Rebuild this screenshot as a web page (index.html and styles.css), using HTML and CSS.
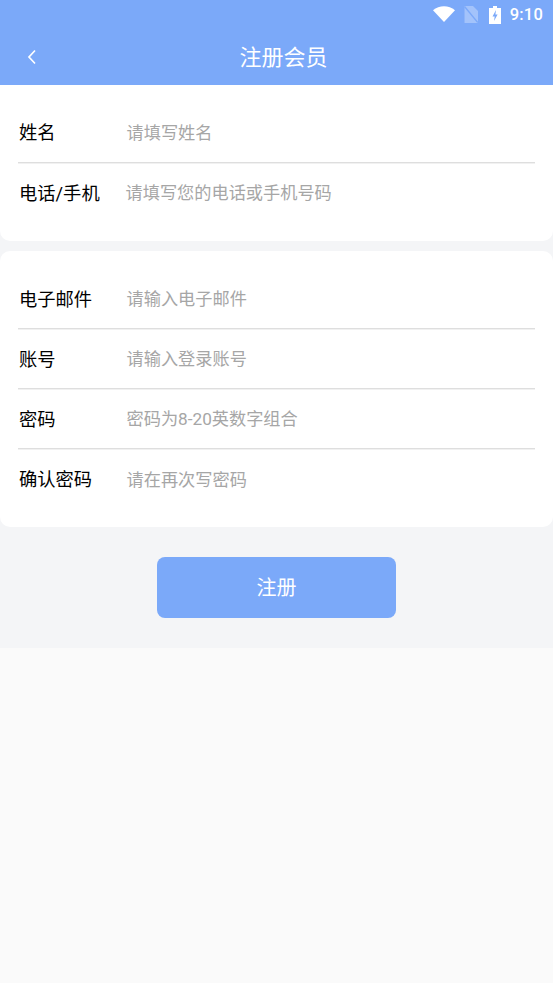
FILE: index.html
```html
<!DOCTYPE html>
<html lang="zh-CN">
<head>
<meta charset="utf-8">
<title>注册会员</title>
<link rel="stylesheet" href="styles.css">
</head>
<body>
<div class="page">
  <header class="top">
    <div class="status">
      <svg class="i-wifi" viewBox="0 0 22 16"><path d="M0 4.2C6.2 -1.2 15.8 -1.2 22 4.2L11 16Z" fill="#fff"/></svg>
      <svg class="i-sim" viewBox="0 0 14 17"><path d="M0.5 0H9L14 5V17H0.5Z" fill="#fff" fill-opacity=".3"/><path d="M0.5 0.5L13.8 16.5" stroke="#7ba9f9" stroke-width="1.4"/></svg>
      <svg class="i-batt" viewBox="0 0 12 18"><path d="M4 0H8V2H12V18H0V2H4Z" fill="#fff"/><path d="M7 4L3.5 10.5H5.7L5 15L8.6 8.4H6.4Z" fill="#7ba9f9"/></svg>
      <span class="time">9:10</span>
    </div>
    <div class="nav">
      <svg class="back" viewBox="0 0 10 16"><path d="M8 1.5L2 8L8 14.5" fill="none" stroke="#fff" stroke-width="1.7"/></svg>
      <h1 class="title">注册会员</h1>
    </div>
  </header>

  <main class="form">
    <section class="card card-first">
      <div class="row"><span class="label">姓名</span><span class="hint">请填写姓名</span></div>
      <div class="row"><span class="label">电话/手机</span><span class="hint hint-tight">请填写您的电话或手机号码</span></div>
    </section>
    <section class="card card-second">
      <div class="row"><span class="label">电子邮件</span><span class="hint">请输入电子邮件</span></div>
      <div class="row"><span class="label">账号</span><span class="hint">请输入登录账号</span></div>
      <div class="row"><span class="label">密码</span><span class="hint">密码为8-20英数字组合</span></div>
      <div class="row"><span class="label">确认密码</span><span class="hint">请在再次写密码</span></div>
    </section>
    <div class="actions"><button class="submit" type="button">注册</button></div>
  </main>
</div>
</body>
</html>
```

FILE: styles.css
```css
* { box-sizing: border-box; }
html, body { margin: 0; padding: 0; }
body {
  width: 553px;
  height: 983px;
  overflow: hidden;
  background: #fafafa;
  font-family: "Roboto", "Noto Sans CJK SC", sans-serif;
}
.page { display: flex; flex-direction: column; }
.top { background: #7ba9f9; height: 85px; color: #fff; display: flex; flex-direction: column; }
.status {
  height: 30px;
  display: flex;
  align-items: center;
  justify-content: flex-end;
  padding-right: 10px;
}
.i-wifi { width: 22px; height: 16px; margin-right: 9px; margin-top: -2px; }
.i-sim { width: 14px; height: 17px; margin-right: 11px; margin-top: -1px; }
.i-batt { width: 12px; height: 18px; margin-right: 9px; margin-top: -1px; }
.time { font-size: 16.5px; font-weight: 500; line-height: 30px; letter-spacing: .2px; color: #fff; }
.nav { position: relative; flex: 1; display: flex; align-items: center; justify-content: center; }
.back { position: absolute; left: 27px; top: 19px; width: 10px; height: 16px; }
.title { margin: 0; font-size: 22px; font-weight: 400; line-height: 30px; position: relative; left: 7px; }
.form { background: #f4f5f7; height: 563px; display: flex; flex-direction: column; }
.card { background: #fff; padding: 18px; }
.card-first { border-radius: 0 0 10px 10px; height: 156px; }
.card-second { border-radius: 10px; margin-top: 10px; height: 276px; }
.row {
  display: flex;
  align-items: center;
  height: 60px;
  padding: 0 0 3px 1px;
  border-bottom: 1px solid #dedede;
  box-shadow: 0 1px 0 #f1f1f1;
}
.card-second .row { padding-bottom: 2px; }
.row:last-child { border-bottom: 0; box-shadow: none; }
.label { width: 107.5px; flex: none; font-size: 18.3px; color: #000; }
.hint { font-size: 17.2px; color: #a6a6a6; }
.hint-tight { margin-left: -1px; }
.actions { display: flex; justify-content: center; padding-top: 30px; }
.submit {
  width: 239px;
  height: 61px;
  border: 0;
  border-radius: 8px;
  background: #7ba9f9;
  color: #fff;
  font-family: inherit;
  font-size: 20px;
  padding: 0 0 2px;
}
```
